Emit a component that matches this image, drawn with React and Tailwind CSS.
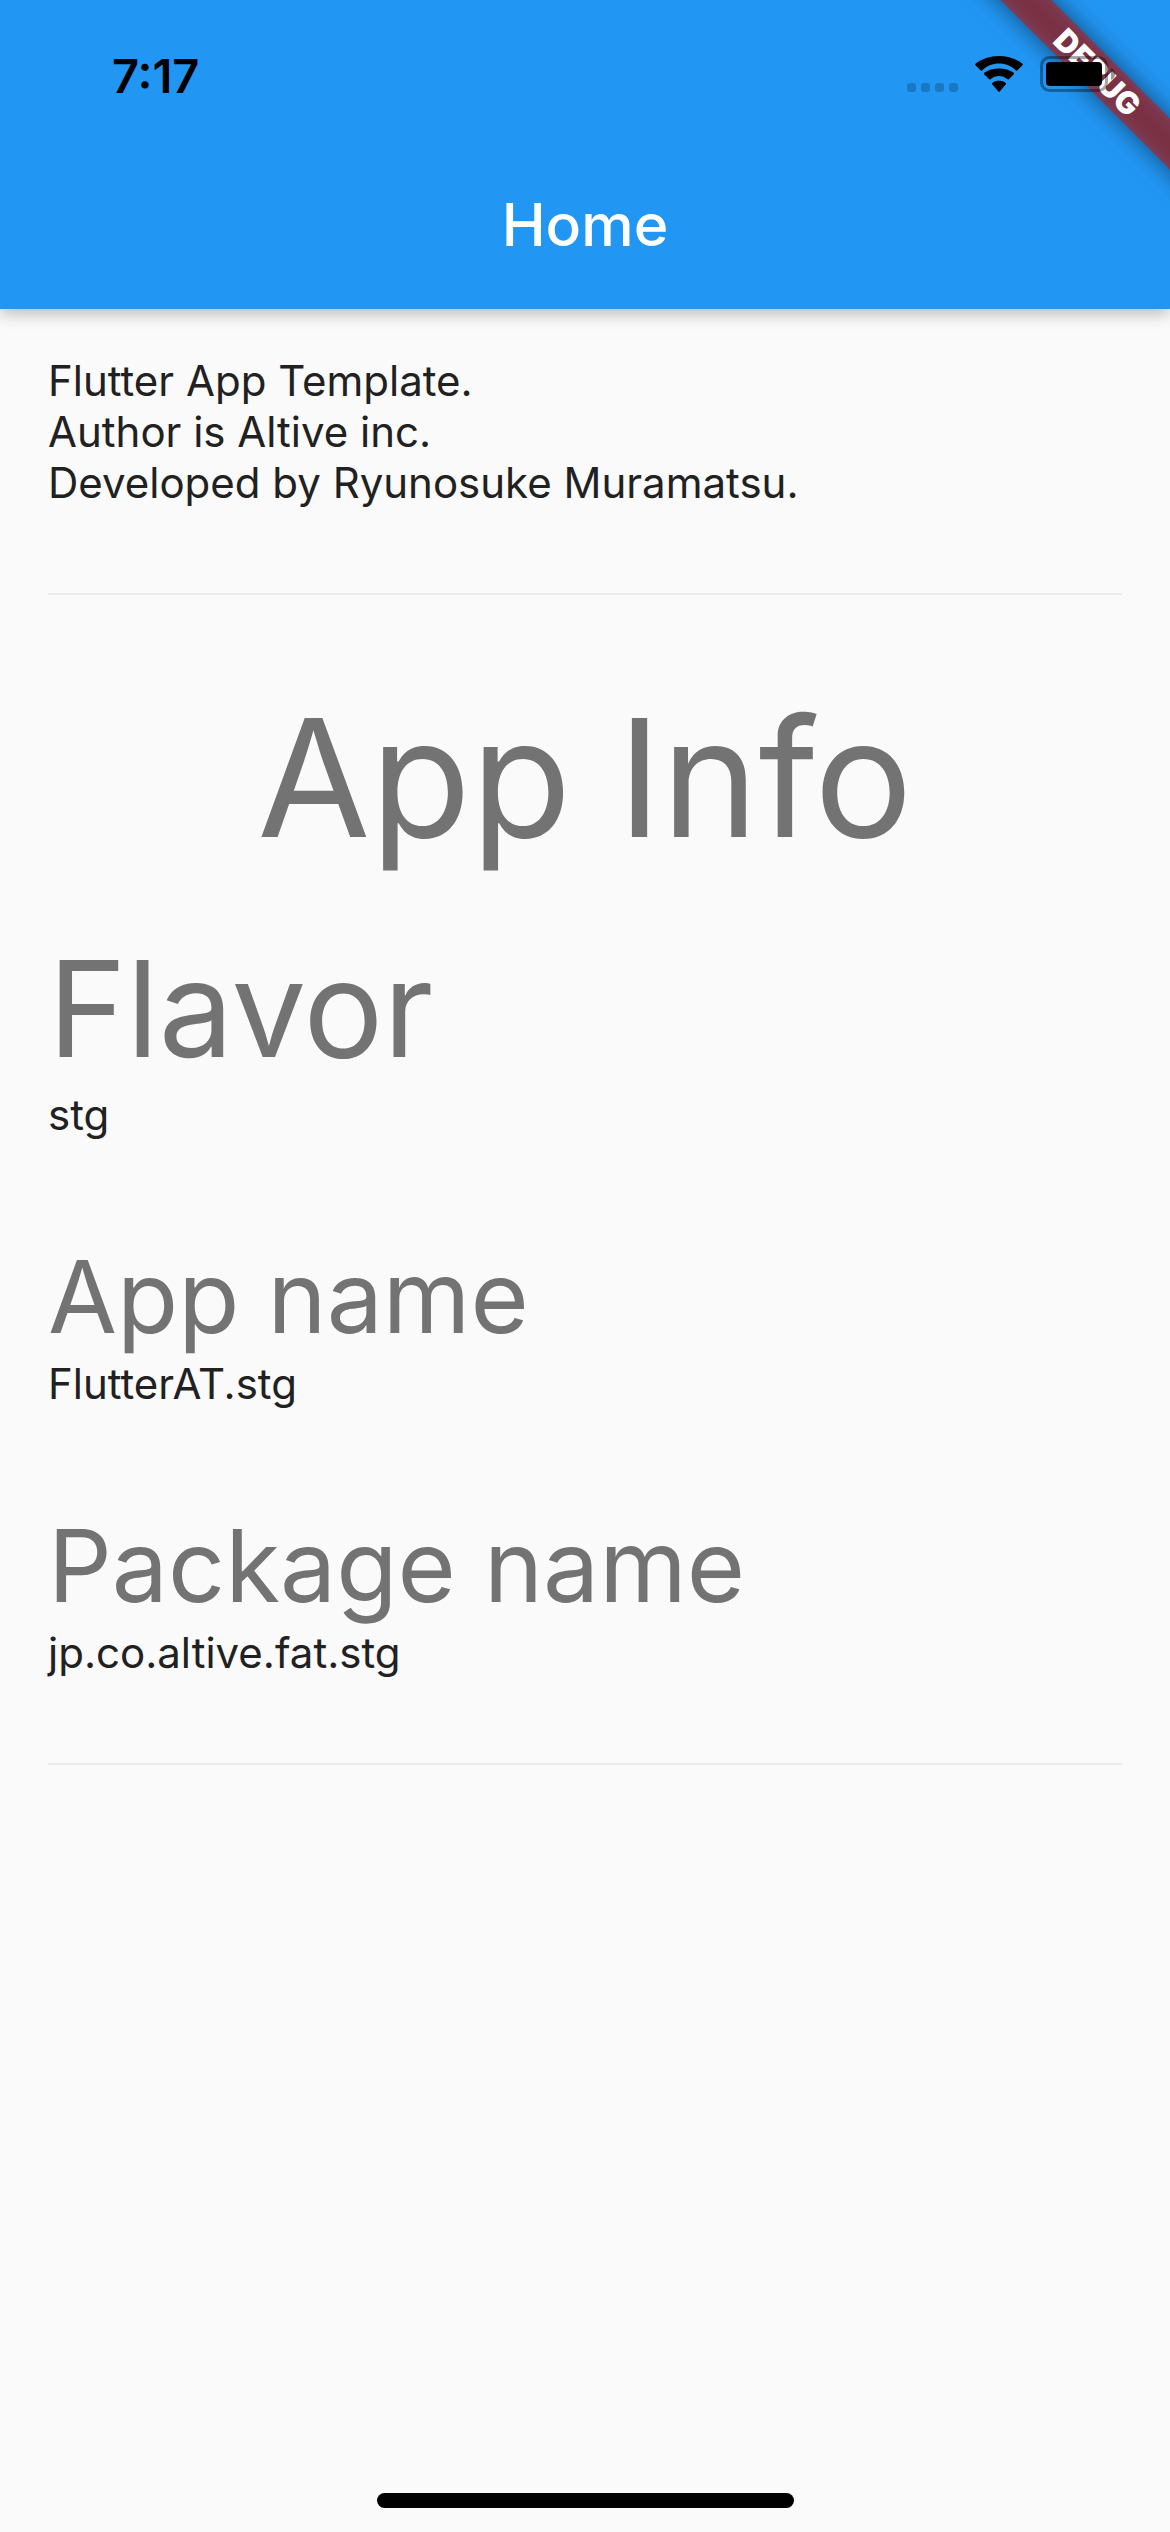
const entries = [
  { label: "Flavor", value: "stg", size: "text-[133px] leading-[161px]" },
  { label: "App name", value: "FlutterAT.stg", size: "text-[100px] leading-[122px]" },
  { label: "Package name", value: "jp.co.altive.fat.stg", size: "text-[100px] leading-[122px]" },
];

function DebugBanner() {
  return (
    <div className="pointer-events-none absolute top-0 right-0 size-60 overflow-hidden">
      <div className="absolute top-[54px] -right-32 h-9 w-[400px] rotate-45">
        <div className="absolute inset-0 bg-black/50 blur-[12px]" />
        <div className="relative flex h-full items-center justify-center bg-[#b71c1c]/63 text-[31px] font-black text-white">
          DEBUG
        </div>
      </div>
    </div>
  );
}

function SignalDots() {
  return (
    <svg width="51" height="36" viewBox="0 0 51 36" fill="#000" fillOpacity="0.2" aria-label="No signal">
      <rect x="0" y="27" width="9" height="9" rx="3" />
      <rect x="14" y="27" width="9" height="9" rx="3" />
      <rect x="28" y="27" width="9" height="9" rx="3" />
      <rect x="42" y="27" width="9" height="9" rx="3" />
    </svg>
  );
}

function WifiIcon() {
  return (
    <svg width="48" height="36" viewBox="0 0 48 36" fill="#000" aria-label="Wi-Fi">
      <path d="M24 7.6c6.5 0 12.400 2.500 16.900 6.900.4.400.9.400 1.300 0l5.300-5.300c.4-.4.4-1 0-1.400C41.200 2.900 33 0 24 0S6.800 2.900.5 7.800c-.4.400-.4 1 0 1.400l5.300 5.300c.4.400.9.400 1.300 0C11.600 10.100 17.500 7.600 24 7.600z" />
      <path d="M24 19.900c3.200 0 6.200 1.200 8.500 3.300.4.400.9.400 1.300 0l5-5c.4-.4.400-1 0-1.400C34.800 13.900 29.600 12.400 24 12.400S13.200 13.900 9.200 16.800c-.4.400-.4 1 0 1.400l5 5c.4.400.9.400 1.300 0C17.800 21.100 20.800 19.900 24 19.900z" />
      <path d="M30.800 28.200c.4-.4.4-1 0-1.300C28.900 25.300 26.500 24.700 24 24.700s-4.900.6-6.800 2.200c-.4.300-.4.900 0 1.300l6.100 7.300c.4.400 1 .4 1.400 0z" />
    </svg>
  );
}

function BatteryIcon() {
  return (
    <svg width="75" height="36" viewBox="0 0 75 36" aria-label="Battery full">
      <rect x="1.500" y="1.500" width="65" height="33" rx="8" fill="none" stroke="#000" strokeOpacity="0.35" strokeWidth="3" />
      <rect x="6" y="6" width="56" height="24" rx="4" fill="#000" />
      <path d="M71 12c2.500 1 4 3.300 4 6s-1.500 5-4 6z" fill="#000" fillOpacity="0.4" />
    </svg>
  );
}

export default function App() {
  return (
    <div className="flex min-h-screen flex-col bg-[#fafafa] font-['Inter',sans-serif] text-[42px] leading-[51px] text-[#212121]">
      <header className="relative bg-[#2196f3] shadow-[0_4px_16px_rgba(0,0,0,0.28)]">
        <DebugBanner />
        <div className="relative flex h-[141px] items-center justify-between pr-[55px] pl-28 text-black">
          <time className="pt-2.5 text-[47px] font-semibold">7:17</time>
          <div className="flex items-center pt-1.5">
            <SignalDots />
            <div className="w-[17px]" />
            <WifiIcon />
            <div className="w-[17px]" />
            <BatteryIcon />
          </div>
        </div>
        <div className="flex h-[168px] items-center justify-center">
          <h1 className="text-[59px] leading-[72px] font-medium text-white">Home</h1>
        </div>
      </header>

      <main className="flex-1 px-12 pt-[46px]">
        <p>
          Flutter App Template.
          <br />
          Author is Altive inc.
          <br />
          Developed by Ryunosuke Muramatsu.
        </p>
        <hr className="mt-[85px] border-t-2 border-[#ebebeb]" />
        <h2 className="mt-[83px] text-center text-[164px] leading-[200px] text-[#737373]">App Info</h2>
        <dl className="mt-[50px] flex flex-col gap-24">
          {entries.map((entry) => (
            <div key={entry.label}>
              <dt className={`${entry.size} text-[#737373]`}>{entry.label}</dt>
              <dd>{entry.value}</dd>
            </div>
          ))}
        </dl>
        <hr className="mt-[85px] border-t-2 border-[#ebebeb]" />
      </main>

      <div className="flex justify-center pb-6">
        <div className="h-[15px] w-[417px] rounded-full bg-black" />
      </div>
    </div>
  );
}
